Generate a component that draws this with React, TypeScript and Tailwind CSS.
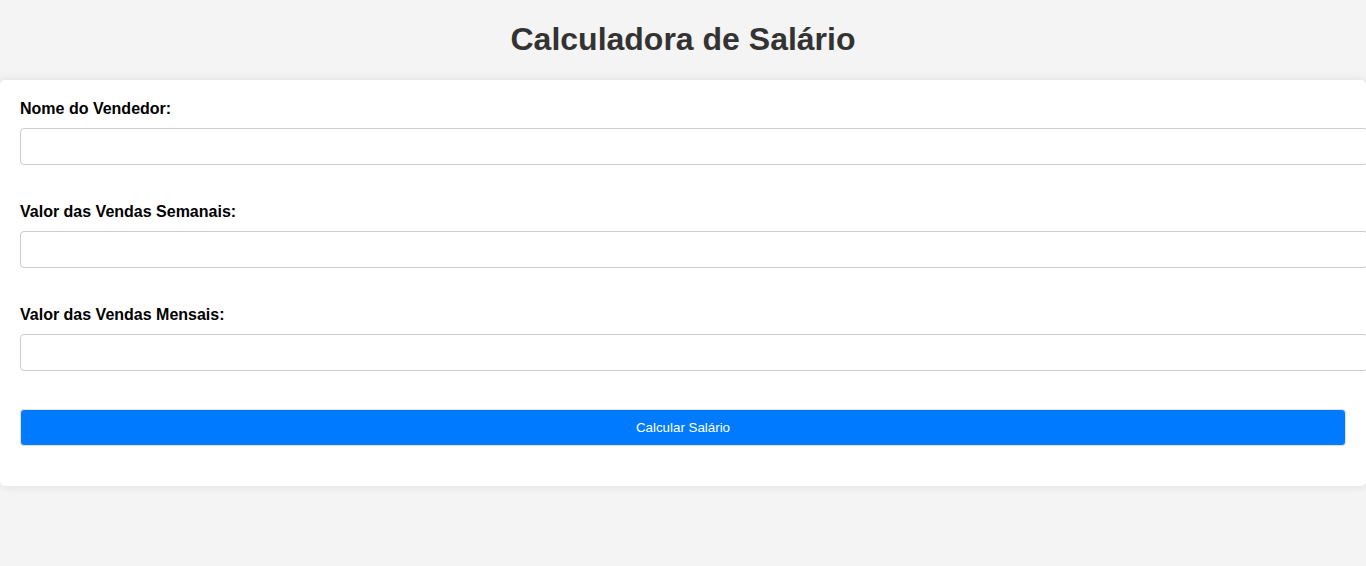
import React from "react";

export default function App() {
  const fields = ["Nome do Vendedor:", "Valor das Vendas Semanais:", "Valor das Vendas Mensais:"];
  return (
    <div className="min-h-[566px] bg-[#f4f4f4] font-['Liberation_Sans',Arial,sans-serif] overflow-hidden">
      <h1 className="text-center text-[32px] font-bold text-[#333] leading-[37px] pt-[21px] pb-[22px] m-0">
        Calculadora de Salário
      </h1>
      <div className="bg-white rounded-[5px] shadow-[0_0_10px_rgba(0,0,0,0.1)] p-5 pb-10 w-[1366px]">
        {fields.map((f, i) => (
          <div key={i} className={i === 0 ? "" : "mt-[38px]"}>
            <label className="block text-[16px] font-bold text-black leading-[18px] mb-[10px]">{f}</label>
            <input
              type="text"
              className="block box-content w-full h-[15px] py-[10px] px-[10px] border border-[#ccc] rounded-[4px] text-[13.33px] bg-white outline-none"
            />
          </div>
        ))}
        <button className="mt-[38px] block w-full h-[37px] bg-[#007bff] text-white text-[13.33px] rounded-[4px] border border-[#e0e0e0]">
          Calcular Salário
        </button>
      </div>
    </div>
  );
}
